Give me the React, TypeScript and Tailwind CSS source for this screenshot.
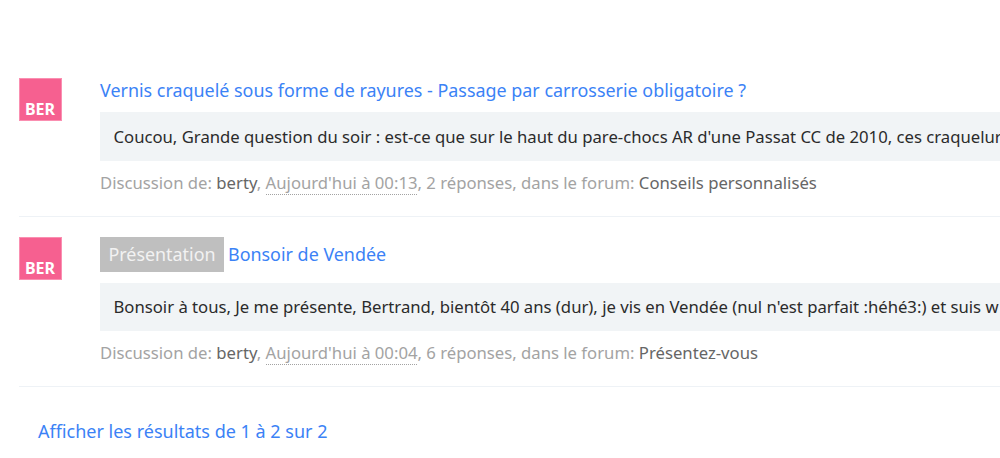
const FONT = "font-['Noto_Sans',sans-serif]";

type ResultRow = {
  label?: string;
  title: string;
  excerpt: string;
  date: string;
  replies: string;
  forum: string;
};

const RESULTS: ResultRow[] = [
  {
    title: "Vernis craquelé sous forme de rayures - Passage par carrosserie obligatoire ?",
    excerpt: "Coucou, Grande question du soir : est-ce que sur le haut du pare-chocs AR d'une Passat CC de 2010, ces craquelur",
    date: "Aujourd'hui à 00:13",
    replies: "2 réponses",
    forum: "Conseils personnalisés",
  },
  {
    label: "Présentation",
    title: "Bonsoir de Vendée",
    excerpt: "Bonsoir à tous, Je me présente, Bertrand, bientôt 40 ans (dur), je vis en Vendée (nul n'est parfait :héhé3:) et suis w",
    date: "Aujourd'hui à 00:04",
    replies: "6 réponses",
    forum: "Présentez-vous",
  },
];

function Avatar() {
  return (
    <div className="flex h-[43px] w-[43px] shrink-0 items-end justify-center border border-[#fa8fb1] bg-[#f66090] pr-[1px] pb-[1px] text-[16px] leading-[20px] font-bold text-white">
      BER
    </div>
  );
}

function Row({ row, first }: { row: ResultRow; first: boolean }) {
  return (
    <div className={`flex gap-[38px] border-b border-[#eef2f6] ${first ? "pt-[18px] pb-[21px] h-[157px]" : "pt-[20px] h-[170px]"}`}>
      <Avatar />
      <div className="w-[1100px] shrink-0">
        <div className={`flex items-center gap-[4px] ${first ? "mt-[-1px] h-[26px]" : "h-[35px]"}`}>
          {row.label && (
            <span className="flex h-[35px] w-[124px] items-center justify-center bg-[#bfbfbf] text-[17.9px] text-[#f2f2f2]">
              {row.label}
            </span>
          )}
          <span className="text-[17.92px] whitespace-nowrap text-[#3b82f6]">{row.title}</span>
        </div>
        <div className={`flex items-center bg-[#f1f4f6] px-[13.5px] text-[16.7px] whitespace-nowrap text-[#2b2b2b] ${first ? "mt-[9px] h-[49px]" : "mt-[11px] h-[48px]"}`}>
          {row.excerpt}
        </div>
        <div className="mt-[11px] text-[16.72px] leading-[22px] whitespace-nowrap text-[#a3a3a3]">
          Discussion de: <span className="text-[#666666]">berty</span>,{" "}
          <span className="border-b border-dotted border-[#a3a3a3]">{row.date}</span>, {row.replies}, dans le forum:{" "}
          <span className="text-[#666666]">{row.forum}</span>
        </div>
      </div>
    </div>
  );
}

export default function App() {
  return (
    <div className={`h-[458px] w-[1000px] overflow-hidden bg-white ${FONT}`}>
      <div className="pt-[60px] pl-[19px]">
        {RESULTS.map((row, i) => (
          <Row key={row.title} row={row} first={i === 0} />
        ))}
        <div className="pt-[31px] pl-[19px] text-[18px] leading-[26px] text-[#3b82f6]">
          Afficher les résultats de 1 à 2 sur 2
        </div>
      </div>
    </div>
  );
}
